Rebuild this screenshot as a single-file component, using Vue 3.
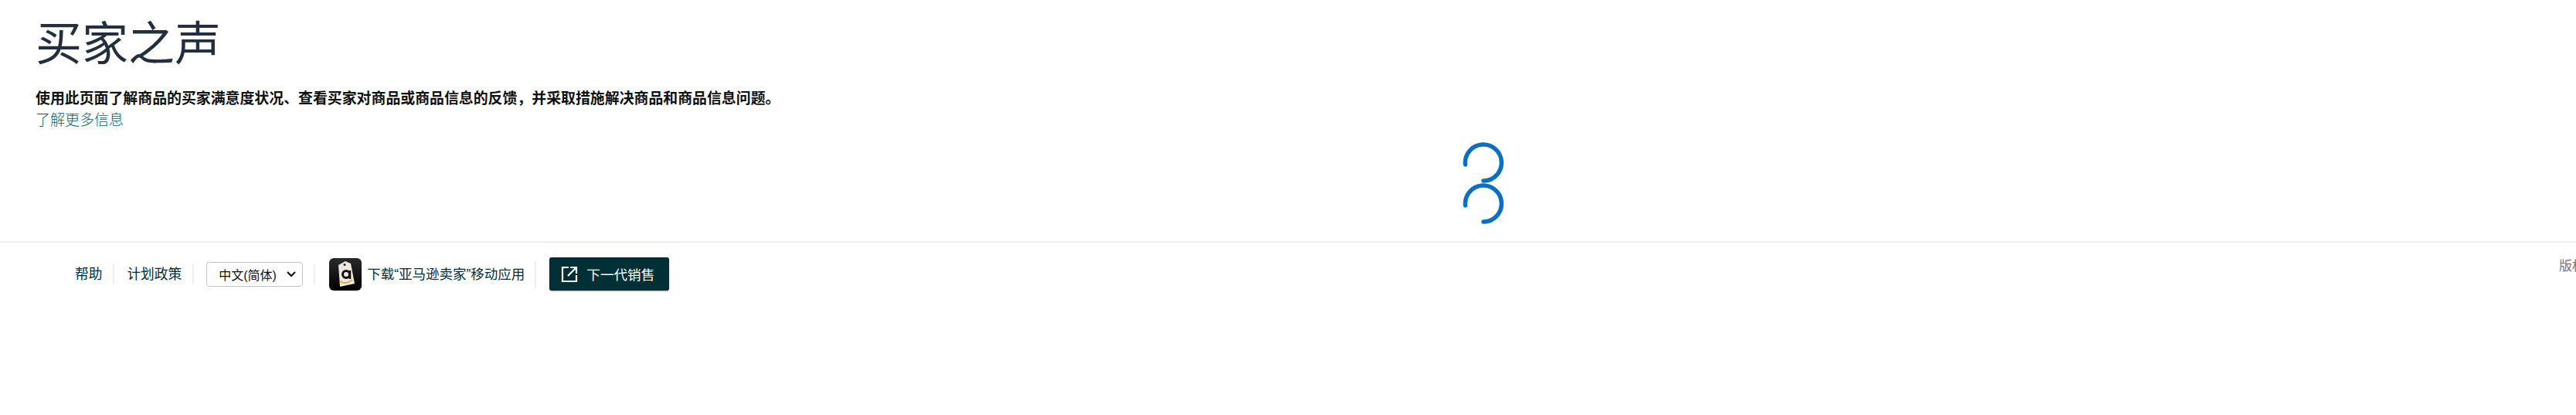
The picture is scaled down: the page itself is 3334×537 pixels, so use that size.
<template>
  <div class="page">
    <header class="head">
      <h1 class="title">买家之声</h1>
      <p class="desc">使用此页面了解商品的买家满意度状况、查看买家对商品或商品信息的反馈，并采取措施解决商品和商品信息问题。</p>
      <a class="more">了解更多信息</a>
    </header>
    <div class="spinner">
      <svg v-for="n in 2" :key="n" class="arc" width="58" height="53" viewBox="0 0 58 53">
        <path d="M5.500 29 A23.500 23.500 0 1 1 29 50" fill="none" stroke="#0d6fc0" stroke-width="5.500" stroke-linecap="round" />
      </svg>
    </div>
    <footer class="foot">
      <nav class="links">
        <a class="item">帮助</a>
        <span class="sep"></span>
        <a class="item">计划政策</a>
        <span class="sep"></span>
        <div class="select">
          <span>中文(简体)</span>
          <svg width="14" height="10" viewBox="0 0 14 10"><path d="M2 2 L7 7 L12 2" fill="none" stroke="#111" stroke-width="2.200" /></svg>
        </div>
        <span class="sep"></span>
        <svg class="app" width="42" height="42" viewBox="0 0 42 42">
          <defs>
            <linearGradient id="appbg" x1="0" y1="0" x2="0" y2="1">
              <stop offset="0" stop-color="#2a2a2a" />
              <stop offset="1" stop-color="#000" />
            </linearGradient>
          </defs>
          <rect width="42" height="42" rx="6" fill="url(#appbg)" />
          <path d="M12 9 L21 4 L28 7 L33 33 L14 37 Z" fill="#ece8de" />
          <circle cx="20" cy="8.500" r="1.500" fill="#222" />
          <circle cx="22" cy="21" r="4.500" fill="none" stroke="#111" stroke-width="3" />
          <path d="M27 16 V27" stroke="#111" stroke-width="2.500" />
          <path d="M14 30 Q21 35 30 28" fill="none" stroke="#e8a33d" stroke-width="1.600" />
        </svg>
        <a class="item app-text">下载“亚马逊卖家”移动应用</a>
        <span class="sep sep-wide"></span>
        <button class="next">
          <svg width="22" height="22" viewBox="0 0 22 22"><path d="M10 2 H2 V20 H20 V12 M12 2 H20 V10 M20 2 L9 13" fill="none" stroke="#fff" stroke-width="2.200" /></svg>
          <span>下一代销售</span>
        </button>
      </nav>
      <span class="copy">版权所有</span>
    </footer>
  </div>
</template>

<script setup>
</script>

<style>
html, body { margin: 0; background: #fff; overflow: hidden; }
</style>

<style scoped>
.page {
  width: 3334px;
  height: 537px;
  overflow: hidden;
  font-family: "Liberation Sans", "Noto Sans CJK SC", sans-serif;
  color: #0f1111;
}
.head { padding: 22px 46px 0; }
.title {
  margin: 0;
  font-size: 60px;
  line-height: 72px;
  font-weight: 400;
  color: #232f3e;
}
.desc {
  margin: 20px 0 0;
  font-size: 18.900px;
  line-height: 28px;
  font-weight: 700;
}
.more {
  display: block;
  font-size: 19px;
  line-height: 28px;
  color: #005f70;
  font-weight: 300;
}
.spinner {
  display: flex;
  flex-direction: column;
  align-items: center;
  padding: 14px 0 0 505px;
}
.arc { display: block; }
.foot {
  margin-top: 22px;
  border-top: 2px solid #eeeeee;
  padding: 19px 22px 0 97px;
  display: flex;
  justify-content: space-between;
}
.links { display: flex; align-items: center; align-self: flex-start; }
.item { font-size: 17.700px; line-height: 24px; color: #002f36; white-space: nowrap; }
.app-text { font-size: 17.500px; }
.sep { width: 2px; height: 26px; background: #eeeeee; margin: 0 16px 0 14px; }
.select {
  display: flex;
  align-items: center;
  justify-content: space-between;
  height: 32px;
  box-sizing: border-box;
  width: 125px;
  padding: 0 7px 0 15px;
  border: 1px solid #c4c4c4;
  border-radius: 4px;
  font-size: 16px;
  white-space: nowrap;
}
.app { margin: 0 7px 0 2px; }
.sep-wide { margin: 0 17px 0 13px; height: 36px; }
.next {
  display: flex;
  align-items: center;
  gap: 11px;
  height: 43px;
  width: 155px;
  padding: 0 15px;
  border: 0;
  border-radius: 3px;
  background: #002f36;
  color: #fff;
  font: inherit;
  font-size: 17.600px;
  white-space: nowrap;
  box-shadow: 0 1px 2px rgba(0, 0, 0, 0.3);
}
.copy {
  font-size: 17px;
  line-height: 24px;
  color: #767676;
  white-space: nowrap;
  flex: none;
  width: 0;
  overflow: visible;
}
</style>
